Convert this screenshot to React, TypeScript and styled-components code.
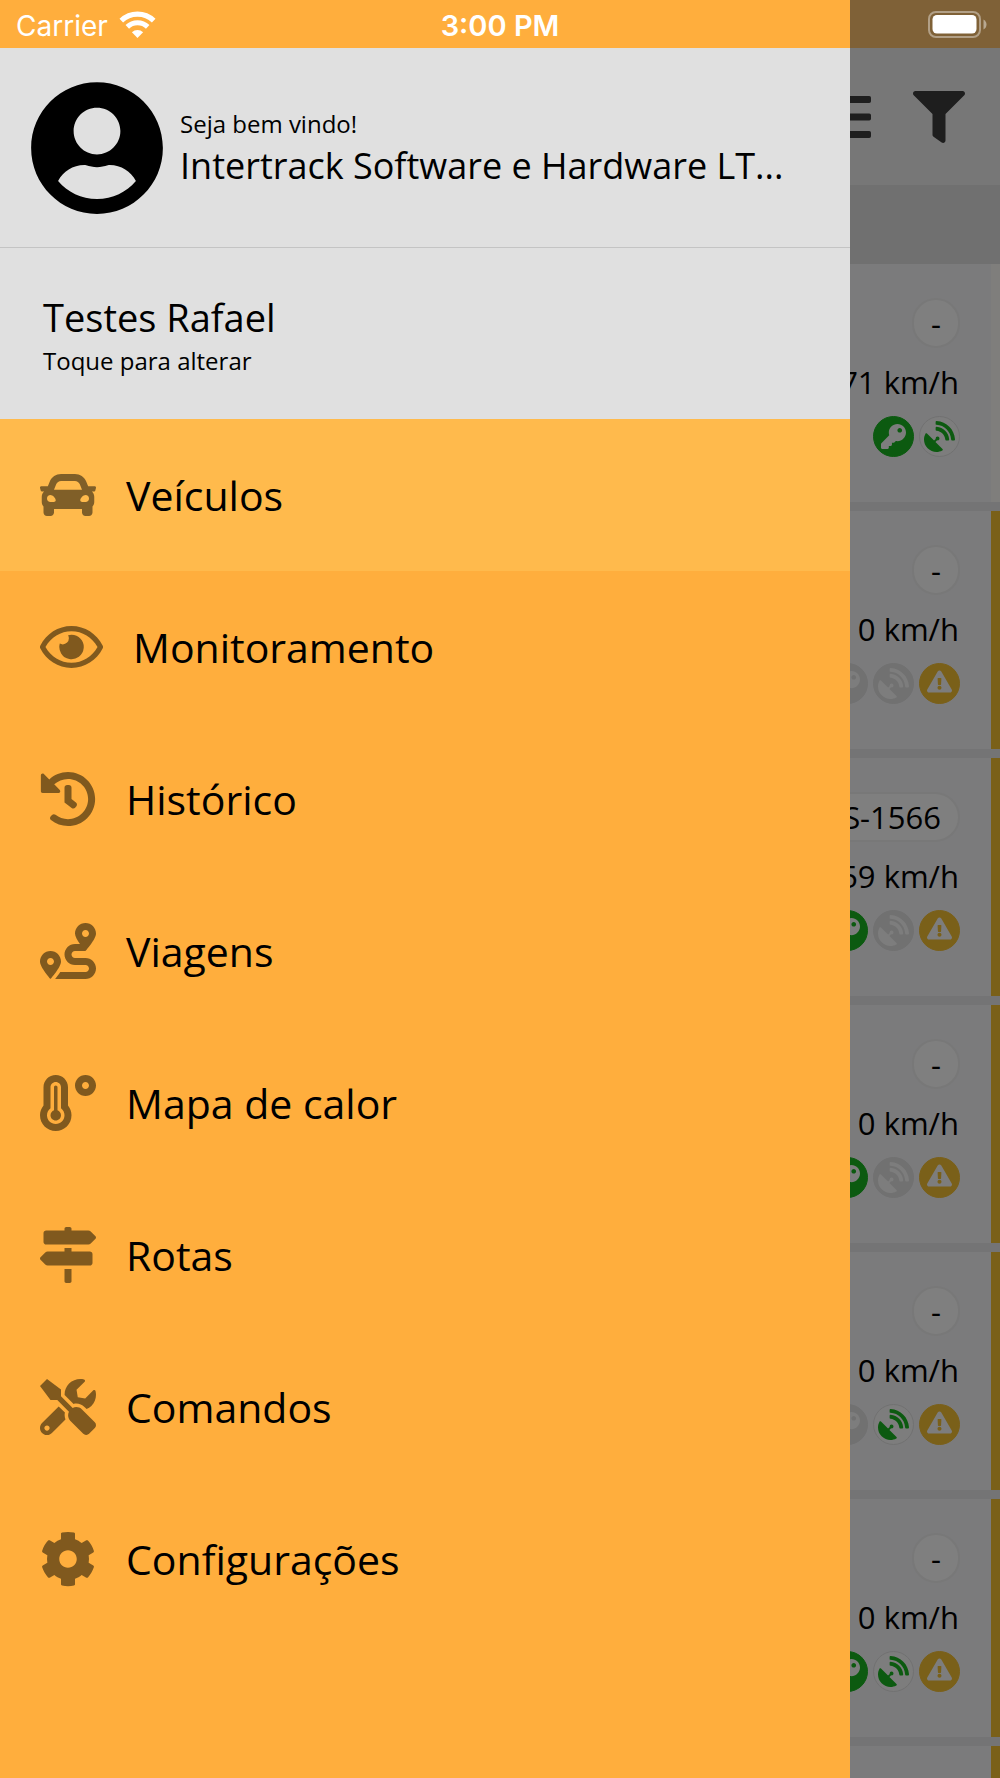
import React from "react";
import styled, { createGlobalStyle } from "styled-components";
import type { IconType } from "react-icons";
import {
  FaCar,
  FaCog,
  FaExclamationTriangle,
  FaFilter,
  FaHistory,
  FaKey,
  FaListUl,
  FaMapSigns,
  FaRegEye,
  FaRoute,
  FaSatelliteDish,
  FaTemperatureHigh,
  FaTools,
  FaUserCircle,
} from "react-icons/fa";

const GlobalStyle = createGlobalStyle`
  *, *::before, *::after { box-sizing: border-box; }
  body {
    margin: 0;
    font-family: "Open Sans", "Noto Sans", sans-serif;
    color: #000;
  }
  button {
    font: inherit;
    color: inherit;
    border: 0;
    padding: 0;
    background: none;
    cursor: pointer;
  }
  ul { list-style: none; margin: 0; padding: 0; }
  p, h1, h2 { margin: 0; font-weight: 400; }
`;

const Screen = styled.div`
  position: relative;
  height: 100vh;
  overflow: hidden;
  background: #e8e8ea;
`;

/* ---------- vehicle list, behind the drawer ---------- */

const StatusBackdrop = styled.div`
  height: 48px;
  background: #ffc26e;
`;

const Toolbar = styled.header`
  display: flex;
  align-items: center;
  justify-content: flex-end;
  gap: 42px;
  height: 137px;
  padding-right: 35px;
  background: #eeeeee;
  color: #3c3c3c;
`;

const ToolButton = styled.button<{ $size: number }>`
  display: flex;
  font-size: ${({ $size }) => $size}px;
`;

const SearchBand = styled.div`
  height: 79px;
  background: #e0e0e0;
`;

const VehicleList = styled.ul`
  display: flex;
  flex-direction: column;
  gap: 9px;
`;

const Card = styled.li<{ $stripe: string }>`
  display: flex;
  flex-direction: column;
  align-items: flex-end;
  height: 238px;
  padding: 34px 31px 0 0;
  background: #f6f6f9;
  border-right: 9px solid ${({ $stripe }) => $stripe};
`;

const Plate = styled.span`
  padding: 0 17px;
  border: 2px solid #f0f0f0;
  border-radius: 25px;
  background: #fefefe;
  font-size: 31px;
  line-height: 46px;
`;

const Speed = styled.p`
  margin-top: 12px;
  padding-right: 1px;
  font-size: 31px;
  line-height: 44px;
`;

const Badges = styled.div`
  display: flex;
  gap: 5px;
  margin-top: 12px;
`;

const Badge = styled.span<{ $bg: string; $fg: string; $ring: string; $lift?: number }>`
  display: flex;
  align-items: center;
  justify-content: center;
  width: 41px;
  height: 41px;
  padding-bottom: ${({ $lift = 0 }) => $lift}px;
  border: 1px solid ${({ $ring }) => $ring};
  border-radius: 50%;
  background: ${({ $bg }) => $bg};
  color: ${({ $fg }) => $fg};
`;

const Scrim = styled.div`
  position: absolute;
  inset: 0;
  background: rgba(0, 0, 0, 0.5);
`;

/* ---------- drawer ---------- */

const Drawer = styled.aside`
  position: absolute;
  inset: 0 auto 0 0;
  width: 85%;
  padding-top: 48px;
  background: #ffae3d;
`;

const Profile = styled.section`
  display: flex;
  align-items: center;
  gap: 17px;
  height: 200px;
  padding: 0 31px;
  border-bottom: 1px solid #c4c4c4;
  background: #e0e0e0;
`;

const Avatar = styled(FaUserCircle)`
  flex: none;
  width: 132px;
  height: 136px;
`;

const ProfileText = styled.div`
  min-width: 0;
`;

const Caption = styled.span`
  display: block;
  font-size: 24px;
  line-height: 36px;
`;

const UserName = styled.h1`
  font-size: 36px;
  line-height: 48px;
  white-space: nowrap;
`;

const Account = styled.button`
  display: flex;
  flex-direction: column;
  align-items: flex-start;
  justify-content: center;
  width: 100%;
  height: 171px;
  padding: 2px 0 0 43px;
  background: #e0e0e0;
`;

const AccountName = styled.span`
  font-size: 38px;
  line-height: 52px;
`;

const MenuLink = styled.a<{ $active: boolean; $iconWidth: number }>`
  display: flex;
  align-items: center;
  gap: 30px;
  height: 152px;
  padding-left: 40px;
  background: ${({ $active }) => ($active ? "#ffba4c" : "transparent")};
  color: #000;
  font-size: 41px;
  line-height: 56px;
  text-decoration: none;

  svg {
    width: ${({ $iconWidth }) => $iconWidth}px;
    height: 56px;
    color: ${({ $active }) => ($active ? "#805f28" : "#80591e")};
  }
`;

/* ---------- status bar ---------- */

const StatusBar = styled.div`
  position: absolute;
  inset: 0 0 auto 0;
  display: grid;
  grid-template-columns: 1fr auto 1fr;
  align-items: center;
  height: 52px;
  padding: 0 13px;
  color: #fff;
  font-family: Inter, Roboto, sans-serif;
  font-size: 28px;
  line-height: 34px;
`;

const Carrier = styled.span`
  display: flex;
  align-items: center;
  gap: 11px;
  padding-left: 3px;
`;

const Clock = styled.time`
  font-size: 29px;
  font-weight: 600;
`;

const BatterySlot = styled.span`
  display: flex;
  justify-content: flex-end;
`;

const WifiIcon = () => (
  <svg width="37" height="31" viewBox="0 0 37 31" fill="none" aria-hidden="true">
    <path d="M2.3 9.6a23.4 23.4 0 0 1 32.4 0" stroke="#fff" strokeWidth="5.2" />
    <path d="M8.3 15.9a14.6 14.6 0 0 1 20.4 0" stroke="#fff" strokeWidth="5" />
    <path d="M12.9 21.3a8 8 0 0 1 11.2 0L18.5 27z" fill="#fff" />
  </svg>
);

const BatteryIcon = () => (
  <svg width="59" height="30" viewBox="0 0 59 30" aria-hidden="true">
    <rect x="1" y="1" width="51" height="25" rx="7" fill="none" stroke="#fff" strokeOpacity="0.4" strokeWidth="2" />
    <rect x="4.5" y="4" width="44" height="18.5" rx="4.5" fill="#fff" />
    <path d="M55.5 8.5c4 2 4 8 0 10z" fill="#fff" fillOpacity="0.45" />
  </svg>
);

/* ---------- data ---------- */

type State = "on" | "off";

interface Vehicle {
  plate: string;
  speed: number;
  ignition: State;
  signal: State;
  alert: boolean;
}

const vehicles: Vehicle[] = [
  { plate: "-", speed: 71, ignition: "on", signal: "on", alert: false },
  { plate: "-", speed: 0, ignition: "off", signal: "off", alert: true },
  { plate: "S-1566", speed: 59, ignition: "on", signal: "off", alert: true },
  { plate: "-", speed: 0, ignition: "on", signal: "off", alert: true },
  { plate: "-", speed: 0, ignition: "off", signal: "on", alert: true },
  { plate: "-", speed: 0, ignition: "on", signal: "on", alert: true },
];

const menu: { label: string; href: string; icon: IconType; iconWidth?: number }[] = [
  { label: "Veículos", href: "#veiculos", icon: FaCar },
  { label: "Monitoramento", href: "#monitoramento", icon: FaRegEye, iconWidth: 63 },
  { label: "Histórico", href: "#historico", icon: FaHistory },
  { label: "Viagens", href: "#viagens", icon: FaRoute },
  { label: "Mapa de calor", href: "#mapa-de-calor", icon: FaTemperatureHigh },
  { label: "Rotas", href: "#rotas", icon: FaMapSigns },
  { label: "Comandos", href: "#comandos", icon: FaTools },
  { label: "Configurações", href: "#configuracoes", icon: FaCog },
];

const GREEN = "#18b420";
const GREY = "#e2e2e2";
const AMBER = "#f4c032";
const LIGHT = "#fafafa";

const VehicleCard = ({ plate, speed, ignition, signal, alert }: Vehicle) => {
  const keyColor = ignition === "on" ? GREEN : GREY;
  const signalOn = signal === "on";
  return (
    <Card $stripe={alert ? AMBER : "#fefdf9"}>
      <Plate>{plate}</Plate>
      <Speed>{speed} km/h</Speed>
      <Badges>
        <Badge $bg={keyColor} $ring={keyColor} $fg={LIGHT}>
          <FaKey size={25} />
        </Badge>
        <Badge $bg={signalOn ? LIGHT : GREY} $ring={GREY} $fg={signalOn ? GREEN : LIGHT}>
          <FaSatelliteDish size={31} />
        </Badge>
        {alert && (
          <Badge $bg={AMBER} $ring={AMBER} $fg={LIGHT} $lift={4}>
            <FaExclamationTriangle size={25} />
          </Badge>
        )}
      </Badges>
    </Card>
  );
};

export default function App() {
  return (
    <>
      <GlobalStyle />
      <Screen>
        <main>
          <StatusBackdrop />
          <Toolbar>
            <ToolButton $size={56} aria-label="Lista">
              <FaListUl />
            </ToolButton>
            <ToolButton $size={52} aria-label="Filtrar">
              <FaFilter />
            </ToolButton>
          </Toolbar>
          <SearchBand />
          <VehicleList>
            {vehicles.map((vehicle, index) => (
              <VehicleCard key={index} {...vehicle} />
            ))}
            {/* next card, not loaded yet */}
            <Card $stripe={AMBER} aria-hidden="true" />
          </VehicleList>
        </main>
        <Scrim />
        <Drawer>
          <Profile>
            <Avatar />
            <ProfileText>
              <Caption>Seja bem vindo!</Caption>
              <UserName>Intertrack Software e Hardware LT...</UserName>
            </ProfileText>
          </Profile>
          <Account>
            <AccountName>Testes Rafael</AccountName>
            <Caption>Toque para alterar</Caption>
          </Account>
          <nav>
            <ul>
              {menu.map(({ label, href, icon: Icon, iconWidth = 56 }, index) => (
                <li key={href}>
                  <MenuLink href={href} $active={index === 0} $iconWidth={iconWidth}>
                    <Icon />
                    {label}
                  </MenuLink>
                </li>
              ))}
            </ul>
          </nav>
        </Drawer>
        <StatusBar>
          <Carrier>
            Carrier
            <WifiIcon />
          </Carrier>
          <Clock>3:00 PM</Clock>
          <BatterySlot>
            <BatteryIcon />
          </BatterySlot>
        </StatusBar>
      </Screen>
    </>
  );
}
